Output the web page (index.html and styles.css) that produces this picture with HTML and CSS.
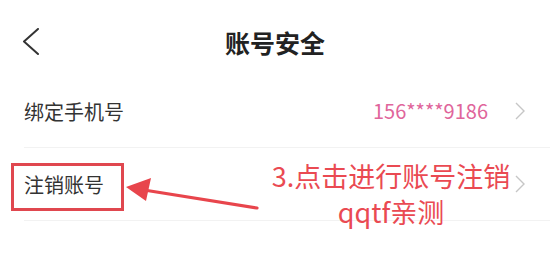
FILE: index.html
```html
<!DOCTYPE html>
<html lang="zh-CN">
<head>
<meta charset="utf-8">
<title>账号安全</title>
<link rel="stylesheet" href="styles.css">
</head>
<body>
<div class="page">
  <header class="header">
    <div class="back">
      <svg width="18" height="28" viewBox="0 0 18 28"><polyline points="16,1 2,13.5 16,26" fill="none" stroke="#333" stroke-width="2" stroke-linecap="round" stroke-linejoin="round"/></svg>
    </div>
    <h1 class="title">账号安全</h1>
    <div></div>
  </header>
  <div class="list">
    <div class="row">
      <span class="label">绑定手机号</span>
      <span class="right">
        <span class="value">156****9186</span>
        <svg class="chev" width="12" height="18" viewBox="0 0 12 18"><polyline points="2,1 10,9 2,17" fill="none" stroke="#c6c6c6" stroke-width="1.4"/></svg>
      </span>
    </div>
    <div class="row annotated">
      <span class="label">注销账号</span>
      <span class="right">
        <svg class="chev" width="12" height="18" viewBox="0 0 12 18"><polyline points="2,1 10,9 2,17" fill="none" stroke="#c6c6c6" stroke-width="1.4"/></svg>
      </span>
      <div class="mark-box"></div>
      <div class="note">3.点击进行账号注销<br>qqtf亲测</div>
    </div>
  </div>
  <svg class="arrow" width="550" height="275" viewBox="0 0 550 275">
    <line x1="257" y1="208" x2="144" y2="190" stroke="#e8454c" stroke-width="3.2" stroke-linecap="round"/>
    <polygon points="126,187 151,178 146,201" fill="#e8454c"/>
  </svg>
</div>
</body>
</html>
```
FILE: styles.css
```css
* { box-sizing: border-box; }
html, body { margin: 0; padding: 0; background: #fff; }
body {
  font-family: "Noto Sans CJK SC", "Noto Sans", sans-serif;
  color: #333;
}
.page {
  position: relative;
  width: 550px;
  height: 275px;
  overflow: hidden;
}
.header {
  height: 75px;
  padding-top: 27px;
  display: grid;
  grid-template-columns: 1fr auto 1fr;
  align-items: start;
}
.back {
  padding-left: 22px;
  height: 30px;
  display: flex;
  align-items: center;
}
.back svg { display: block; }
.title {
  margin: 0;
  font-size: 25px;
  line-height: 30px;
  font-weight: 700;
  color: #222;
}
.list { margin-left: 24px; }
.row {
  position: relative;
  height: 73px;
  border-bottom: 1px solid #f2f2f2;
  display: flex;
  align-items: center;
  justify-content: space-between;
  padding-right: 24px;
}
.label {
  font-size: 20px;
  line-height: 28px;
  color: #333;
  padding-top: 2px;
}
.right {
  display: flex;
  align-items: center;
  gap: 26px;
}
.value {
  font-size: 20px;
  line-height: 28px;
  color: #e0659b;
}
.chev { display: block; }
.mark-box {
  position: absolute;
  left: -13px;
  top: 15px;
  width: 113px;
  height: 48px;
  border: 3px solid #e0474f;
}
.note {
  position: absolute;
  left: 237px;
  top: 10px;
  width: 260px;
  text-align: center;
  font-size: 27px;
  line-height: 36px;
  color: #ea4a52;
}
.arrow {
  position: absolute;
  left: 0;
  top: 0;
  pointer-events: none;
}
```
